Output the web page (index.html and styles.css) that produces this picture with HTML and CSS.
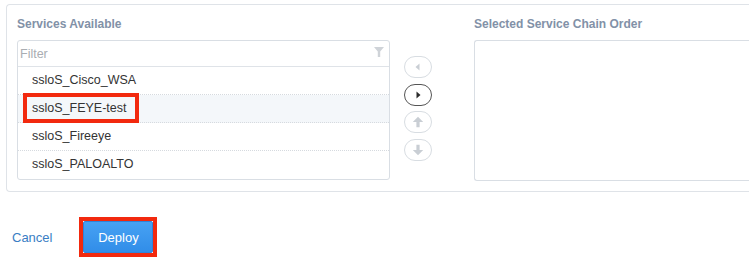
FILE: index.html
```html
<!DOCTYPE html>
<html>
<head>
<meta charset="utf-8">
<link rel="stylesheet" href="styles.css">
</head>
<body>
<div class="panel">
  <div class="col col-left">
    <div class="title">Services Available</div>
    <div class="list">
      <div class="filter">
        <span class="placeholder">Filter</span>
        <svg class="funnel" width="10" height="10" viewBox="0 0 10 10"><path d="M0 0H10L6.2 4.4V10H3.8V4.4Z" fill="#cfd3d8"/></svg>
      </div>
      <div class="row">ssloS_Cisco_WSA</div>
      <div class="row selected">ssloS_FEYE-test<span class="mark"></span></div>
      <div class="row">ssloS_Fireeye</div>
      <div class="row">ssloS_PALOALTO</div>
    </div>
  </div>
  <div class="col-mid">
    <div class="btn">
      <svg width="8" height="10" viewBox="0 0 8 10"><path d="M5.5 1.5V8.5L1.5 5Z" fill="#c9ced4"/></svg>
    </div>
    <div class="btn active">
      <svg width="8" height="10" viewBox="0 0 8 10"><path d="M2.5 1.5V8.5L6.5 5Z" fill="#2b2b2b"/></svg>
    </div>
    <div class="btn">
      <svg width="12" height="12" viewBox="0 0 12 12"><path d="M6 0.8L11.2 6H7.6V11.2H4.4V6H0.8Z" fill="#c9ced4"/></svg>
    </div>
    <div class="btn">
      <svg width="12" height="12" viewBox="0 0 12 12"><path d="M6 11.2L11.2 6H7.6V0.8H4.4V6H0.8Z" fill="#c9ced4"/></svg>
    </div>
  </div>
  <div class="col col-right">
    <div class="title">Selected Service Chain Order</div>
    <div class="target"></div>
  </div>
</div>
<div class="footer">
  <a class="cancel">Cancel</a>
  <span class="deploy-mark"><button class="deploy">Deploy</button></span>
</div>
</body>
</html>
```
FILE: styles.css
```css
html, body {
  margin: 0;
  padding: 0;
  background: #fff;
  overflow: hidden;
  font-family: "Liberation Sans", Arial, sans-serif;
}
.panel {
  margin: 4px 0 0 6px;
  width: calc(100% - 6px);
  height: 188px;
  box-sizing: border-box;
  border: 1px solid #dfe3e8;
  border-right: none;
  border-radius: 4px 0 0 4px;
  display: flex;
  padding: 11px 0 0 10px;
}
.title {
  font-size: 12px;
  font-weight: bold;
  color: #8291a7;
  line-height: 16px;
  height: 16px;
  margin-bottom: 8px;
  white-space: nowrap;
}
.col-left {
  width: 373px;
  flex: none;
}
.list {
  border: 1px solid #d9dee4;
  border-radius: 3px;
  height: 140px;
  box-sizing: border-box;
}
.filter {
  height: 25px;
  border-bottom: 1px solid #dfe3e8;
  display: flex;
  align-items: center;
  justify-content: space-between;
  padding: 0 5px 0 2px;
}
.placeholder {
  font-size: 12.5px;
  color: #a9adb2;
}
.funnel {
  margin-top: -3px;
}
.row {
  position: relative;
  height: 28px;
  box-sizing: border-box;
  border-bottom: 1px dotted #d6dadf;
  padding-left: 14px;
  font-size: 12.5px;
  color: #333;
  line-height: 27px;
}
.row:last-child {
  border-bottom: none;
}
.row.selected {
  background: #f4f7fa;
}
.mark {
  position: absolute;
  left: 5px;
  top: -2px;
  width: 116px;
  height: 30px;
  box-sizing: border-box;
  border: 4px solid #f2290e;
}
.col-mid {
  width: 28px;
  flex: none;
  margin-left: 14px;
  padding-top: 40px;
  display: flex;
  flex-direction: column;
  gap: 5.5px;
}
.btn {
  width: 28px;
  height: 22px;
  box-sizing: border-box;
  border: 1px solid #d8dde2;
  border-radius: 11px;
  display: flex;
  align-items: center;
  justify-content: center;
}
.btn.active {
  border-color: #555;
}
.col-right {
  margin-left: 42px;
  flex: 1;
  min-width: 0;
}
.target {
  border: 1px solid #d9dee4;
  border-right: none;
  border-radius: 3px 0 0 3px;
  height: 141px;
  box-sizing: border-box;
}
.footer {
  display: flex;
  align-items: center;
  margin-top: 25px;
  padding-left: 12px;
}
.cancel {
  font-size: 13px;
  color: #3a7ec4;
  margin-right: 27px;
}
.deploy-mark {
  display: flex;
  border: 4px solid #f2290e;
}
.deploy {
  width: 70px;
  height: 32px;
  border: 1px solid #2f83da;
  border-radius: 2px;
  background: linear-gradient(#47a2f4, #318de8);
  color: #fff;
  font-family: "Liberation Sans", Arial, sans-serif;
  font-size: 13px;
  padding: 0;
}
```
